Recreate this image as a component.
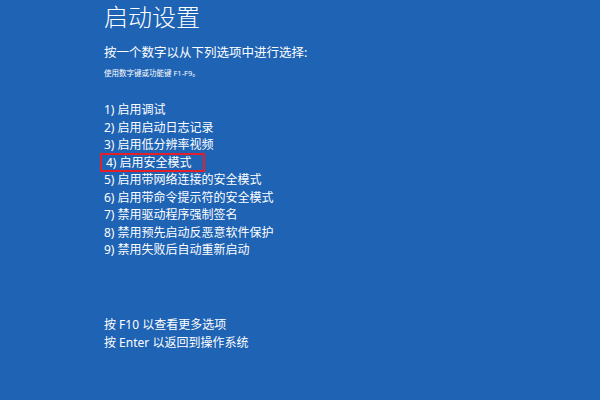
const options = [
  "1) 启用调试",
  "2) 启用启动日志记录",
  "3) 启用低分辨率视频",
  "4) 启用安全模式",
  "5) 启用带网络连接的安全模式",
  "6) 启用带命令提示符的安全模式",
  "7) 禁用驱动程序强制签名",
  "8) 禁用预先启动反恶意软件保护",
  "9) 禁用失败后自动重新启动",
];

export default function App() {
  return (
    <div className="w-[600px] h-[400px] bg-[#1e63b4] text-white pl-[104px] pt-[2px] font-['Noto_Sans','Noto_Sans_CJK_SC',sans-serif] overflow-hidden">
      <h1 className="text-[24px] leading-[30px] font-light">启动设置</h1>

      <p className="mt-[12px] text-[12.5px] leading-[18px]">按一个数字以从下列选项中进行选择:</p>
      <p className="mt-[5px] text-[7.5px] leading-[12px]">使用数字键或功能键 F1-F9。</p>

      <ul className="mt-[22px]">
        {options.map((label, i) =>
          i === 3 ? (
            <li
              key={label}
              className="w-[103px] ml-[-3px] pl-[5px] h-[17.5px] text-[12px] leading-[17.5px] outline-2 outline-[#e3202a] -outline-offset-1"
            >
              {label}
            </li>
          ) : (
            <li key={label} className="h-[17.5px] text-[12px] leading-[17.5px]">
              {label}
            </li>
          )
        )}
      </ul>

      <div className="mt-[57px] text-[12px] leading-[18px]">
        <p>按 F10 以查看更多选项</p>
        <p>按 Enter 以返回到操作系统</p>
      </div>
    </div>
  );
}
